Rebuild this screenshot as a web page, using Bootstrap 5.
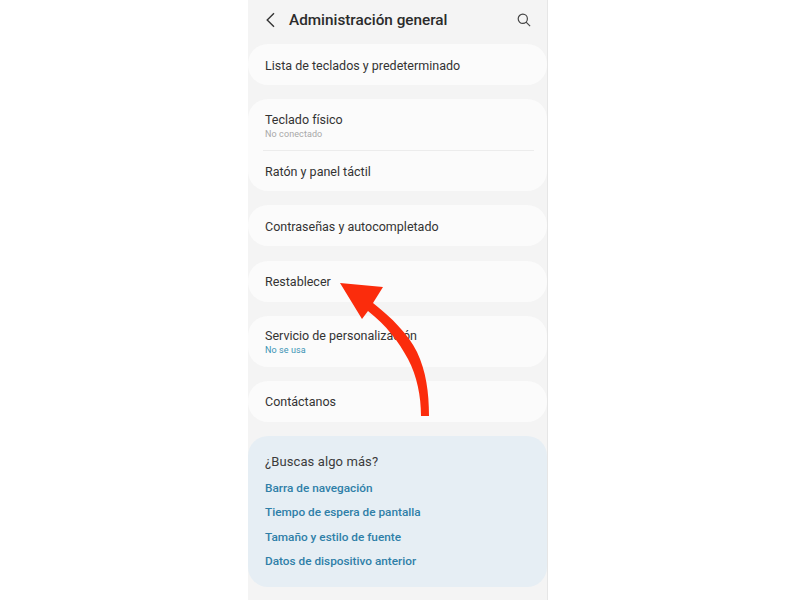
<!DOCTYPE html>
<html lang="es">
<head>
<meta charset="utf-8">
<title>Administración general</title>
<link href="https://cdn.jsdelivr.net/npm/bootstrap@5.3.0/dist/css/bootstrap.min.css" rel="stylesheet">
<style>
html, body { height: 100%; background: #fff; overflow: hidden; }
.stage { position: relative; width: 800px; height: 600px; font-family: Roboto, "Liberation Sans", sans-serif; }
.phone { width: 299px; height: 600px; margin-left: 248px; background: #f4f4f4; border-right: 1px solid #e6e6e6; box-sizing: content-box; overflow: hidden; }
.topbar { height: 44px; padding: 0 16px 4px 18px; color: #252525; }
.topbar h1 { font-size: 15.3px; font-weight: 500; margin: 0 0 0 13px; color: #2b2b2b; }
.group { background: #fbfbfb; border-radius: 20px; margin-bottom: 14px; padding: 0 13px 0 17px; }
.group-wide { margin-bottom: 15px; }
.row-item { color: #333; font-size: 12.5px; line-height: 16px; }
.row-one { height: 41px; padding-top: 2px; }
.row-high { padding-top: 0; }
.row-two { height: 51px; }
.row-last { height: 41px; border-top: 1px solid #ececec; padding-top: 1px; margin-left: -2px; padding-left: 2px; }
.sub { font-size: 9px; line-height: 11px; letter-spacing: .1px; color: #a8a8a8; margin-top: 1px; }
.sub-blue { color: #3a93b4; }
.title-low { padding-top: 2px; }
.title-mid { padding-top: 1px; }
.more { background: #e6eef4; border-radius: 20px; height: 151px; padding: 17px 17px 0; margin-top: 14px; }
.more-title { font-size: 13px; line-height: 17px; color: #3b3b3b; letter-spacing: .1px; margin-bottom: 10px; }
.more-link { display: block; font-size: 11.8px; font-weight: 500; line-height: 16px; color: #2f7fa8; text-decoration: none; margin-bottom: 8.3px; }
.arrow { position: absolute; left: 0; top: 0; width: 800px; height: 600px; pointer-events: none; }
</style>
</head>
<body>
<div class="stage">
  <div class="phone d-flex flex-column">
    <header class="topbar d-flex align-items-center flex-shrink-0">
      <svg width="10" height="16" viewBox="0 0 10 16" fill="none" stroke="#333" stroke-width="1.4"><path d="M8 1.2 1.2 8 8 14.8"/></svg>
      <h1 class="flex-grow-1">Administración general</h1>
      <svg width="14" height="14" viewBox="0 0 14 14" fill="none" stroke="#444" stroke-width="1.2"><circle cx="5.8" cy="5.8" r="4.6"/><path d="m9.1 9.1 4 4"/></svg>
    </header>
    <section class="group">
      <div class="row-item row-one d-flex align-items-center">Lista de teclados y predeterminado</div>
    </section>
    <section class="group">
      <div class="row-item row-two title-low d-flex flex-column justify-content-center">
        <div>Teclado físico</div>
        <div class="sub">No conectado</div>
      </div>
      <div class="row-item row-last d-flex align-items-center">Ratón y panel táctil</div>
    </section>
    <section class="group group-wide">
      <div class="row-item row-one d-flex align-items-center">Contraseñas y autocompletado</div>
    </section>
    <section class="group">
      <div class="row-item row-one row-high d-flex align-items-center">Restablecer</div>
    </section>
    <section class="group">
      <div class="row-item row-two title-mid d-flex flex-column justify-content-center">
        <div>Servicio de personalización</div>
        <div class="sub sub-blue">No se usa</div>
      </div>
    </section>
    <section class="group mb-0">
      <div class="row-item row-one row-high d-flex align-items-center">Contáctanos</div>
    </section>
    <section class="more">
      <div class="more-title">¿Buscas algo más?</div>
      <a class="more-link" href="#">Barra de navegación</a>
      <a class="more-link" href="#">Tiempo de espera de pantalla</a>
      <a class="more-link" href="#">Tamaño y estilo de fuente</a>
      <a class="more-link" href="#">Datos de dispositivo anterior</a>
    </section>
  </div>
  <svg class="arrow" viewBox="0 0 800 600"><path fill="#fb2c0c" d="M340 283 383 287 373 303C392 318 408 334 417 352 426 371 429 392 429 416H421C421 396 417 376 408 359 399 342 386 325 368 311L362 319Z"/></svg>
</div>
<script src="https://cdn.jsdelivr.net/npm/bootstrap@5.3.0/dist/js/bootstrap.bundle.min.js"></script>
</body>
</html>
